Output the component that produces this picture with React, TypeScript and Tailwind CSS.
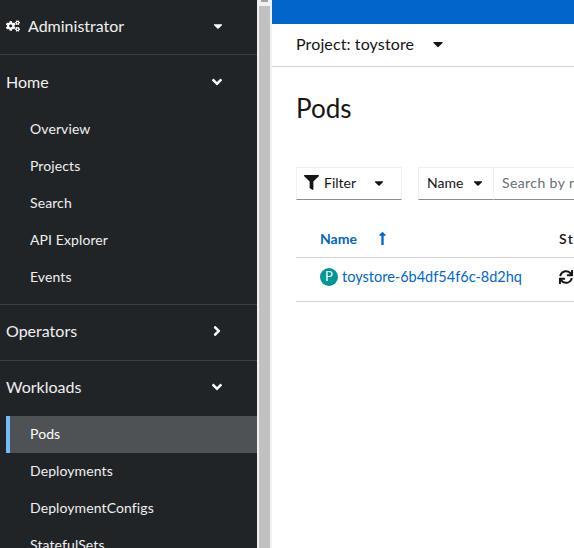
import { FaCaretDown, FaAngleDown, FaAngleRight, FaFilter, FaSync, FaCogs, FaLongArrowAltUp } from "react-icons/fa";

const font = "font-['Lato','Open_Sans',sans-serif]";

function SubItem({ label, active }: { label: string; active?: boolean }) {
  return (
    <div
      className={
        active
          ? "h-[37px] ml-[6px] pl-[24px] pb-[2px] flex items-center text-[14px] tracking-[0.1px] text-white bg-[#4f5255] border-l-[4px] border-[#73bcf7]"
          : "h-[37px] pl-[30px] flex items-center text-[14px] tracking-[0.1px] text-[#f0f0f0]"
      }
    >
      {active ? <span className="-ml-[4px]">{label}</span> : label}
    </div>
  );
}

function Section({ label, open, lift }: { label: string; open: boolean; lift?: string }) {
  return (
    <div className={`h-[55px] pl-[6px] pr-[32px] flex items-center justify-between text-[16px] text-[#f0f0f0] ${lift ?? "pb-[2px]"}`}>
      <span>{label}</span>
      {open ? <FaAngleDown className="text-white text-[16px]" /> : <FaAngleRight className="text-white text-[16px]" />}
    </div>
  );
}

export default function App() {
  return (
    <div className={`${font} w-[574px] h-[548px] overflow-hidden flex bg-white`}>
      <nav className="w-[257px] shrink-0 bg-[#212427]">
        <div className="h-[55px] pl-[6px] pr-[32px] pb-[2px] flex items-center justify-between border-b border-[#3c3f42] text-[16px] text-[#f0f0f0]">
          <span className="flex items-center gap-[8px]">
            <FaCogs className="text-white text-[14px]" />
            Administrator
          </span>
          <FaCaretDown className="text-white text-[14px]" />
        </div>
        <Section label="Home" open />
        <div className="pb-[9px] border-b border-[#3c3f42]">
          {["Overview", "Projects", "Search", "API Explorer", "Events"].map((l) => (
            <SubItem key={l} label={l} />
          ))}
        </div>
        <div className="border-b border-[#3c3f42]">
          <Section label="Operators" open={false} lift="pb-[3px]" />
        </div>
        <Section label="Workloads" open lift="pb-[4px]" />
        <SubItem label="Pods" active />
        <div className="-mt-[1px]">
          {["Deployments", "DeploymentConfigs", "StatefulSets"].map((l) => (
            <SubItem key={l} label={l} />
          ))}
        </div>
      </nav>

      <div className="w-[15px] shrink-0 bg-[#f1f1f1] px-[2px]">
        <div className="mx-[2px] h-[2px] bg-[#a3a3a3]" />
        <div className="mt-[4px] h-[542px] bg-[#c1c1c1]" />
      </div>

      <main className="flex-1 min-w-0">
        <div className="h-[24px] bg-[#0066cc]" />
        <div className="h-[43px] pl-[24px] pb-[2px] flex items-center gap-[16px] border-b border-[#d2d2d2] text-[16px] tracking-[0.12px] text-[#151515]">
          <span>Project: toystore</span>
          <FaCaretDown className="text-[#151515] text-[16px]" />
        </div>
        <div className="pl-[24px]">
          <h1 className="h-[100px] pt-[23px] text-[26px] leading-[36px] text-[#151515]">Pods</h1>
          <div className="flex h-[33px] text-[14px]">
            <div className="w-[106px] flex items-center pl-[7px] pr-[15px] pb-[2px] justify-between border border-[#f0f0f0] border-b-[#8a8d90] text-[#151515]">
              <span className="flex items-center gap-[5px]">
                <FaFilter className="text-[15px]" />
                Filter
              </span>
              <FaCaretDown className="text-[14px]" />
            </div>
            <div className="ml-[16px] w-[76px] flex items-center pl-[8px] pr-[8px] pb-[2px] justify-between border border-[#f0f0f0] border-b-[#8a8d90] text-[#151515]">
              Name
              <FaCaretDown className="text-[14px]" />
            </div>
            <div className="flex-1 min-w-0 whitespace-nowrap overflow-hidden flex items-center pl-[8px] pb-[2px] tracking-[0.4px] border-t border-[#f0f0f0] border-b border-b-[#8a8d90] text-[#6a6e73]">
              Search by name...
            </div>
          </div>
          <div className="mt-[20px] h-[38px] pb-[1px] flex items-center border-b border-[#d2d2d2] text-[14px] font-bold">
            <span className="ml-[24px] w-[239px] shrink-0 text-[#0066cc] flex items-center gap-[18px]">
              Name
              <FaLongArrowAltUp className="text-[15px]" />
            </span>
            <span className="text-[#151515] whitespace-nowrap font-semibold tracking-[1.5px]">Status</span>
          </div>
          <div className="h-[44px] pb-[5px] flex items-center border-b border-[#d2d2d2] text-[14.5px] whitespace-nowrap">
            <span className="ml-[24px] w-[18px] h-[18px] shrink-0 rounded-full bg-[#009596] text-white text-[13px] flex items-center justify-center">
              P
            </span>
            <span className="ml-[4px] w-[217px] shrink-0 text-[#0066cc]">toystore-6b4df54f6c-8d2hq</span>
            <FaSync className="shrink-0 text-[14px] text-[#151515]" />
          </div>
        </div>
      </main>
    </div>
  );
}
